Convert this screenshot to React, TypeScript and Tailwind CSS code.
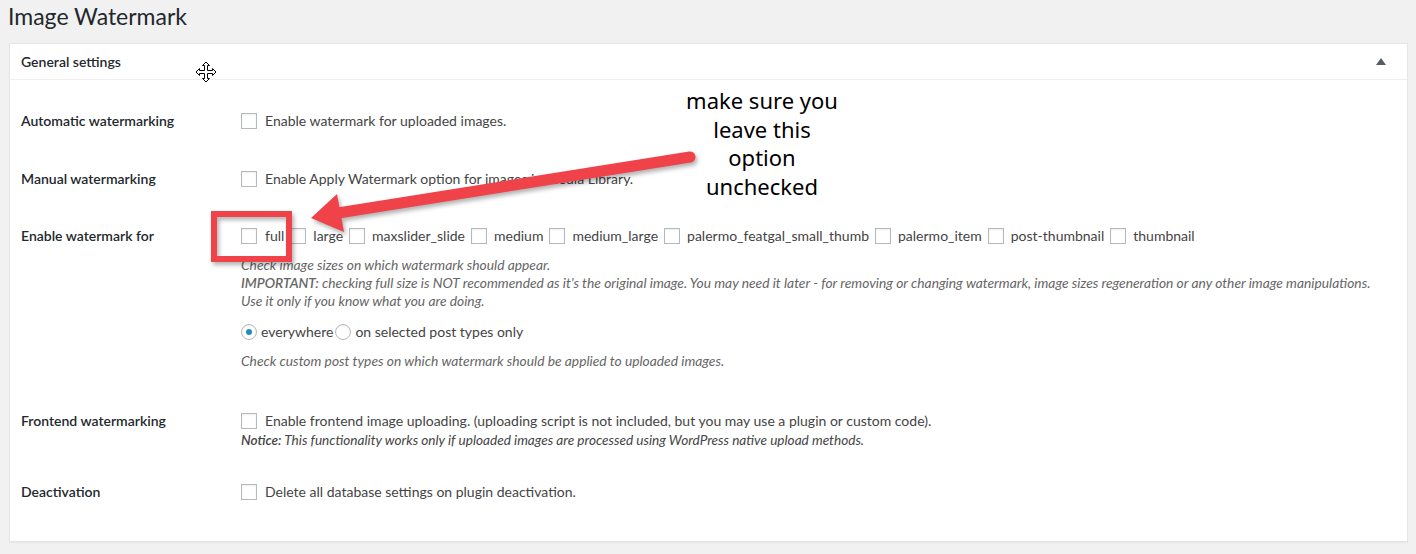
import React from "react"

const sizes = ["full", "large", "maxslider_slide", "medium", "medium_large", "palermo_featgal_small_thumb", "palermo_item", "post-thumbnail", "thumbnail"]

function Box() {
    return <span className="inline-block w-4 h-4 shrink-0 border border-[#b4b9be] bg-white shadow-[inset_0_1px_2px_rgba(0,0,0,0.07)]" />
}

function Radio({ checked }: { checked?: boolean }) {
    return (
        <span className="inline-flex items-center justify-center w-4 h-4 shrink-0 rounded-full border border-[#b4b9be] bg-white shadow-[inset_0_1px_2px_rgba(0,0,0,0.07)]">
            {checked && <span className="w-[6px] h-[6px] rounded-full bg-[#1e8cbe]" />}
        </span>
    )
}

function Row({ label, children, className = "" }: { label: string; children: React.ReactNode; className?: string }) {
    return (
        <div className={`flex ${className}`}>
            <div className="w-[220px] shrink-0 text-[14px] leading-5 font-semibold text-[#23282d]">{label}</div>
            <div className="flex-1">{children}</div>
        </div>
    )
}

function Check({ text }: { text: string }) {
    return (
        <label className="flex items-center gap-2 text-[14px] leading-5 text-[#444]">
            <Box />
            <span>{text}</span>
        </label>
    )
}

export default function App() {
    return (
        <div className="relative w-[1416px] h-[554px] bg-[#f1f1f1] overflow-hidden" style={{ fontFamily: "Lato, 'Liberation Sans', sans-serif" }}>
            <h1 className="pl-2 pt-[2px] h-[31px] text-[23px] leading-[29px] font-normal text-[#23282d]">Image Watermark</h1>
            <div className="mt-3 ml-[9px] w-[1399px] h-[499px] bg-white border border-[#e5e5e5] shadow-[0_1px_1px_rgba(0,0,0,0.04)]">
                <div className="h-[36px] px-[11px] flex items-center justify-between border-b border-[#eee]">
                    <span className="text-[14px] font-semibold text-[#23282d]">General settings</span>
                    <span className="mr-[10px] w-0 h-0 border-l-[5px] border-r-[5px] border-b-[7px] border-l-transparent border-r-transparent border-b-[#555d66]" />
                </div>
                <div className="px-[11px] pt-[31px]">
                    <Row label="Automatic watermarking">
                        <Check text="Enable watermark for uploaded images." />
                    </Row>
                    <Row label="Manual watermarking" className="mt-[38px]">
                        <Check text="Enable Apply Watermark option for images in Media Library." />
                    </Row>
                    <Row label="Enable watermark for" className="mt-[37px]">
                        <div className="flex items-center text-[14px] leading-5 text-[#444]">
                            {sizes.map((s, i) => (
                                <label key={s} className={`flex items-center ${i > 0 ? "ml-[6px] gap-[7px]" : "gap-2"}`}>
                                    <Box />
                                    <span>{s}</span>
                                </label>
                            ))}
                        </div>
                        <div className="mt-[10px] text-[13.8px] leading-[18px] italic text-[#666]">
                            <p>Check image sizes on which watermark should appear.</p>
                            <p><b className="font-semibold">IMPORTANT:</b> checking full size is NOT recommended as it's the original image. You may need it later - for removing or changing watermark, image sizes regeneration or any other image manipulations.</p>
                            <p>Use it only if you know what you are doing.</p>
                        </div>
                        <div className="mt-3 flex items-center text-[14px] leading-5 text-[#444]">
                            <label className="flex items-center gap-1"><Radio checked /><span>everywhere</span></label>
                            <label className="flex items-center gap-1 ml-[2px]"><Radio /><span>on selected post types only</span></label>
                        </div>
                        <p className="mt-[10px] text-[13.8px] leading-[18px] italic text-[#666]">Check custom post types on which watermark should be applied to uploaded images.</p>
                    </Row>
                    <Row label="Frontend watermarking" className="mt-[41px]">
                        <Check text="Enable frontend image uploading. (uploading script is not included, but you may use a plugin or custom code)." />
                        <p className="text-[13.6px] leading-[18px] italic text-[#444]"><b className="font-semibold">Notice:</b> This functionality works only if uploaded images are processed using WordPress native upload methods.</p>
                    </Row>
                    <Row label="Deactivation" className="mt-[33px]">
                        <Check text="Delete all database settings on plugin deactivation." />
                    </Row>
                </div>
            </div>

            {/* move cursor */}
            <svg className="absolute left-[195px] top-[61px]" width="22" height="22" viewBox="0 0 22 22">
                <path d="M11 1 L14.5 4.5 L12.5 4.5 L12.5 9.5 L17.5 9.5 L17.5 7.5 L21 11 L17.5 14.5 L17.5 12.5 L12.5 12.5 L12.5 17.5 L14.5 17.5 L11 21 L7.5 17.5 L9.5 17.5 L9.5 12.5 L4.5 12.5 L4.5 14.5 L1 11 L4.5 7.5 L4.5 9.5 L9.5 9.5 L9.5 4.5 L7.5 4.5 Z" fill="white" stroke="black" strokeWidth="1" strokeLinejoin="miter" />
            </svg>

            {/* annotation */}
            <svg className="absolute left-0 top-0 pointer-events-none drop-shadow-[2px_3px_2px_rgba(0,0,0,0.3)]" width="1416" height="554" viewBox="0 0 1416 554">
                <rect x="214" y="214" width="75" height="45" fill="none" stroke="#ef4249" strokeWidth="6" />
                <line x1="690" y1="157" x2="338" y2="213" stroke="#ef4249" strokeWidth="11" strokeLinecap="round" />
                <polygon points="311,218 337,194 344,232" fill="#ef4249" />
            </svg>
            <div className="absolute left-[662px] top-[86px] w-[200px] text-center text-[22px] leading-[28.7px] text-black" style={{ fontFamily: "'Noto Sans', sans-serif" }}>
                make sure you<br />leave this<br />option<br />unchecked
            </div>
        </div>
    )
}
